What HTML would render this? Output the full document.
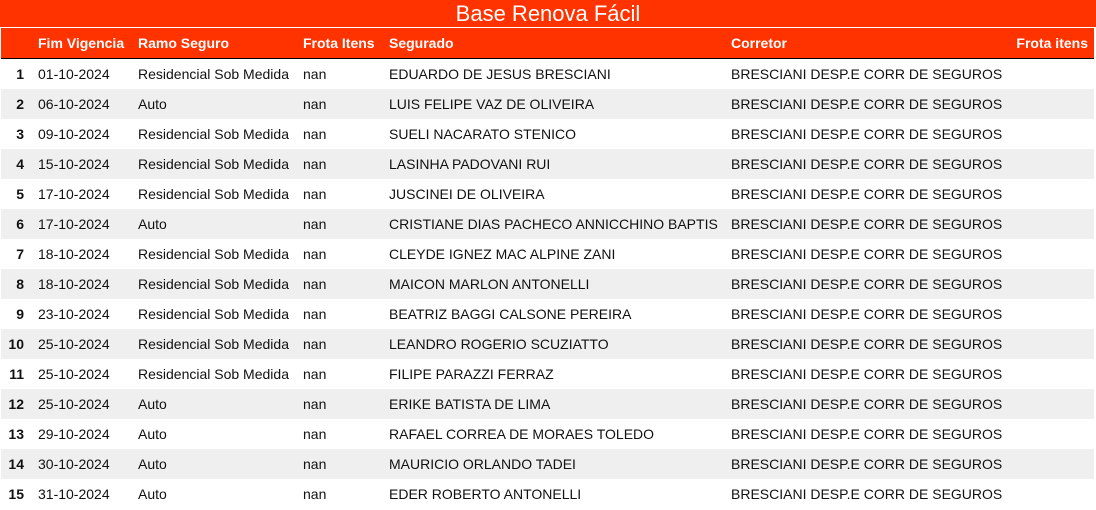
<!DOCTYPE html><html><head><style>
body{margin:0;width:1096px;height:510px;background:#fff;font-family:"Liberation Sans",Arial,sans-serif;overflow:hidden;position:relative}
.t{position:absolute;left:0;top:0;width:1096px;height:27px;background:#ff3300;color:#fff;font-size:22px;text-align:center;line-height:27px}
.h{position:absolute;left:1px;top:28px;width:1093px;height:30px;background:#ff3300;border-bottom:1px solid #000}
.r{position:absolute;left:1px;width:1093px;height:30px}
.h span,.r span{position:absolute;top:0;line-height:30px;font-size:14px;white-space:nowrap}
.h span{color:#fff;font-weight:bold}
.r span{color:#111}
.r .i{font-weight:bold;right:auto;width:23px;text-align:right;left:0}
</style></head><body>
<div class="t">Base Renova Fácil</div>
<div class="h"><span style="left:37px">Fim Vigencia</span><span style="left:137px">Ramo Seguro</span><span style="left:302px">Frota Itens</span><span style="left:388px">Segurado</span><span style="left:730px">Corretor</span><span style="right:6px">Frota itens</span></div>
<div id="rows"></div>
<script>
var d=[["01-10-2024","Residencial Sob Medida","EDUARDO DE JESUS BRESCIANI"],["06-10-2024","Auto","LUIS FELIPE VAZ DE OLIVEIRA"],["09-10-2024","Residencial Sob Medida","SUELI NACARATO STENICO"],["15-10-2024","Residencial Sob Medida","LASINHA PADOVANI RUI"],["17-10-2024","Residencial Sob Medida","JUSCINEI DE OLIVEIRA"],["17-10-2024","Auto","CRISTIANE DIAS PACHECO ANNICCHINO BAPTIS"],["18-10-2024","Residencial Sob Medida","CLEYDE IGNEZ MAC ALPINE ZANI"],["18-10-2024","Residencial Sob Medida","MAICON MARLON ANTONELLI"],["23-10-2024","Residencial Sob Medida","BEATRIZ BAGGI CALSONE PEREIRA"],["25-10-2024","Residencial Sob Medida","LEANDRO ROGERIO SCUZIATTO"],["25-10-2024","Residencial Sob Medida","FILIPE PARAZZI FERRAZ"],["25-10-2024","Auto","ERIKE BATISTA DE LIMA"],["29-10-2024","Auto","RAFAEL CORREA DE MORAES TOLEDO"],["30-10-2024","Auto","MAURICIO ORLANDO TADEI"],["31-10-2024","Auto","EDER ROBERTO ANTONELLI"]];
var h="";d.forEach(function(x,i){h+='<div class="r" style="top:'+(59+i*30)+'px;background:'+(i%2?'#efefef':'#fff')+'"><span class="i">'+(i+1)+'</span><span style="left:37px">'+x[0]+'</span><span style="left:137px">'+x[1]+'</span><span style="left:302px">nan</span><span style="left:388px">'+x[2]+'</span><span style="left:730px">BRESCIANI DESP.E CORR DE SEGUROS</span></div>'});
document.getElementById("rows").innerHTML=h;
</script>
</body></html>
